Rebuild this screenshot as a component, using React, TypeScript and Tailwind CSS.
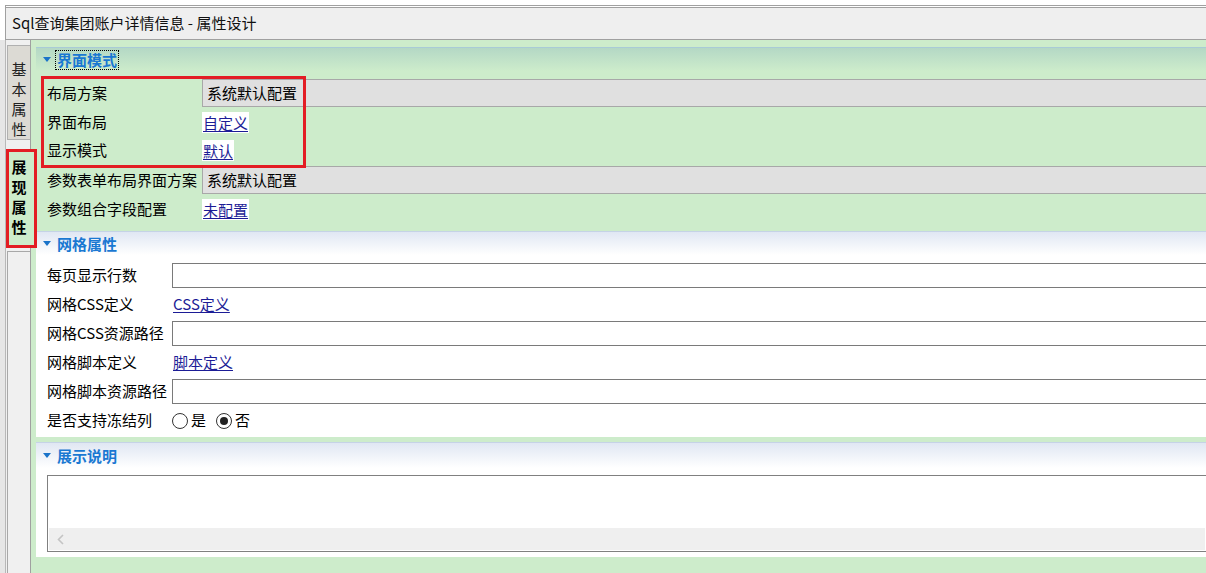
import React from "react";

const cjk = "font-['Noto_Sans_CJK_SC','Noto_Sans',sans-serif]";

function Caret() {
  return (
    <svg width="8" height="5" viewBox="0 0 8 5" className="shrink-0">
      <path d="M0 0 L8 0 L4 5 Z" fill="#1a73c9" />
    </svg>
  );
}

function SectionHeader({
  title,
  green,
  focused,
  height,
}: {
  title: string;
  green?: boolean;
  focused?: boolean;
  height: string;
}) {
  return (
    <div
      className={`${height} flex items-center gap-[5px] pl-[7px] border-t bg-gradient-to-b ${
        green
          ? "border-[#a9cbd6] from-[#b4d8c5] to-[#cdeccb]"
          : "border-[#c5d3e6] from-[#e0e7f3] to-white"
      }`}>
      <Caret />
      <span
        className={`text-[15px] leading-[18px] font-bold text-[#1a78d2] px-px ${
          focused ? "outline-1 outline-dotted outline-black" : ""
        }`}>
        {title}
      </span>
    </div>
  );
}

function LinkValue({ text }: { text: string }) {
  return (
    <span className="bg-white px-px py-[2px] text-[#1c1c96] underline underline-offset-2 leading-[17px]">
      {text}
    </span>
  );
}

function GreenRow({
  label,
  height,
  children,
  gray,
}: {
  label: string;
  height: string;
  children: React.ReactNode;
  gray?: boolean;
}) {
  return (
    <div className={`flex items-center ${height}`}>
      <div className="w-[166px] pl-[11px] whitespace-nowrap">{label}</div>
      {gray ? (
        <div className="flex-1 h-full flex items-center pl-[4px] bg-[#e0e0e0] border-t border-b border-l border-[#a8a8a8]">
          {children}
        </div>
      ) : (
        <div className="flex-1 flex items-center">{children}</div>
      )}
    </div>
  );
}

function GridRow({ label, children }: { label: string; children: React.ReactNode }) {
  return (
    <div className="flex items-center h-[29px]">
      <div className="w-[136px] pl-[11px] whitespace-nowrap">{label}</div>
      <div className="flex-1 flex items-center">{children}</div>
    </div>
  );
}

function TextBox() {
  return <div className="flex-1 h-[25px] bg-white border-t border-b border-l border-[#7a7a7a]" />;
}

function Radio({ checked, label }: { checked?: boolean; label: string }) {
  return (
    <span className="flex items-center gap-[3px] mr-[10px]">
      <span className="w-[16px] h-[16px] rounded-full border border-[#333] bg-white flex items-center justify-center">
        {checked && <span className="w-[8px] h-[8px] rounded-full bg-[#222]" />}
      </span>
      <span>{label}</span>
    </span>
  );
}

export default function App() {
  return (
    <div className={`relative w-[1206px] h-[573px] overflow-hidden bg-white text-[15px] text-black ${cjk}`}>
      {/* title */}
      <div className="pl-[5px] pt-[5px]">
        <div className="border-l border-t border-[#a0a0a0] pt-px">
          <div className="h-[33px] flex items-center pl-[6px] bg-[#efefef] border-t border-b border-[#a0a0a0] text-[15px] text-[#111]">
            Sql查询集团账户详情信息 - 属性设计
          </div>
        </div>
      </div>

      {/* body */}
      <div className="flex h-[533px] bg-[#e6e6e6] pl-[5px]">
        <div className="flex flex-1 border-l border-[#b8b8b8]">
          {/* side tabs */}
          <div className="w-[25px] flex flex-col bg-[#f0f0f0] border-r border-[#a0a0a0]">
            <div className="mt-[5px] ml-px h-[95px] flex flex-col items-center pt-[13px] bg-[#dcdad4] border-t border-l border-b border-[#b0b0b0] text-[15px] leading-[20px] text-[#222]">
              <span>基</span>
              <span>本</span>
              <span>属</span>
              <span>性</span>
            </div>
            <div className="mt-[10px] ml-px mr-[-1px] h-[97px] flex flex-col items-center pt-[7px] bg-[#cdeccb] text-[15px] leading-[20px] font-bold text-black">
              <span>展</span>
              <span>现</span>
              <span>属</span>
              <span>性</span>
            </div>
            <div className="mt-[4px] ml-px flex-1 bg-[#f0f0f0] border-t border-l border-[#a8a8a8]" />
          </div>

          {/* main */}
          <div className="flex-1 bg-[#cdeccb] pl-[5px] pt-[7px]">
            {/* 界面模式 */}
            <div className="pb-[3px]">
              <SectionHeader title="界面模式" green focused height="h-[24px]" />
              <div className="h-[8px]" />
              <GreenRow label="布局方案" height="h-[28px]" gray>
                系统默认配置
              </GreenRow>
              <GreenRow label="界面布局" height="h-[30px]">
                <LinkValue text="自定义" />
              </GreenRow>
              <GreenRow label="显示模式" height="h-[29px] pb-[2px]">
                <LinkValue text="默认" />
              </GreenRow>
              <GreenRow label="参数表单布局界面方案" height="h-[28px]" gray>
                系统默认配置
              </GreenRow>
              <GreenRow label="参数组合字段配置" height="h-[34px] pb-[3px]">
                <LinkValue text="未配置" />
              </GreenRow>
            </div>

            {/* 网格属性 */}
            <div className="bg-white pb-[2px]">
              <SectionHeader title="网格属性" height="h-[24px]" />
              <div className="h-[6px]" />
              <GridRow label="每页显示行数">
                <TextBox />
              </GridRow>
              <GridRow label="网格CSS定义">
                <span className="text-[#1c1c96] underline underline-offset-2 ml-px">CSS定义</span>
              </GridRow>
              <GridRow label="网格CSS资源路径">
                <TextBox />
              </GridRow>
              <GridRow label="网格脚本定义">
                <span className="text-[#1c1c96] underline underline-offset-2 ml-px">脚本定义</span>
              </GridRow>
              <GridRow label="网格脚本资源路径">
                <TextBox />
              </GridRow>
              <GridRow label="是否支持冻结列">
                <Radio label="是" />
                <Radio label="否" checked />
              </GridRow>
            </div>

            {/* 展示说明 */}
            <div className="mt-[5px] bg-white pb-[5px]">
              <SectionHeader title="展示说明" height="h-[26px]" />
              <div className="mt-[7px] ml-[11px] h-[77px] flex flex-col border-t border-b border-l border-[#808080]">
                <div className="flex-1 bg-white" />
                <div className="h-[22px] mx-px mb-px bg-[#efefef] flex items-center pl-[8px]">
                  <svg width="7" height="11" viewBox="0 0 7 11">
                    <path d="M6 1 L1.5 5.5 L6 10" fill="none" stroke="#c4c4c4" strokeWidth="1.6" />
                  </svg>
                </div>
              </div>
            </div>
          </div>
        </div>
      </div>

      {/* annotation boxes */}
      <div className="absolute left-[41px] top-[76px] w-[265px] h-[92px] border-[3px] border-[#e31d24] pointer-events-none" />
      <div className="absolute left-[6px] top-[149px] w-[31px] h-[99px] border-[3px] border-[#e31d24] pointer-events-none" />
    </div>
  );
}
